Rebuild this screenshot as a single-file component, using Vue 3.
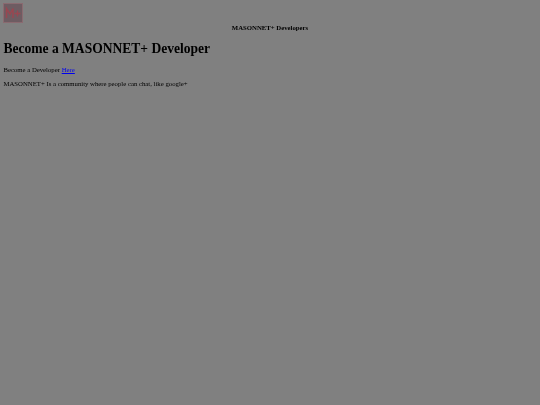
<script setup>
</script>

<template>
  <div class="page">
    <div class="content">
      <svg class="logo" width="20" height="20" viewBox="0 0 20 20" aria-label="MASONNET+ logo">
        <rect width="20" height="20" fill="#6e5c62" />
        <rect x="0.5" y="0.5" width="19" height="19" fill="none" stroke="#8a6a70" />
        <path d="M3.5 15V5.5L7 11l3-5.5V15" fill="none" stroke="#9a4650" stroke-width="1.5" />
        <path d="M11.5 10.5h6M14.5 7.5v6" fill="none" stroke="#9a4650" stroke-width="1.3" />
      </svg>
      <p class="title">MASONNET+ Developers</p>
      <h1>Become a MASONNET+ Developer</h1>
      <p class="line first">Become a Developer <a href="#">Here</a></p>
      <p class="line">MASONNET+ Is a community where people can chat, like google+</p>
    </div>
  </div>
</template>

<style scoped>
.page {
  min-height: 405px;
  box-sizing: border-box;
  padding: 3px 3px 3px 3px;
  background: #808080;
  color: #000;
  font-family: "Liberation Serif", serif;
  font-size: 6.75px;
}
.content {
  filter: blur(0.2px);
}
.logo {
  display: block;
}
.title {
  margin: 0;
  text-align: center;
  font-weight: bold;
  line-height: 9px;
}
h1 {
  margin: 8px 0 0 0.4px;
  font-size: 13.55px;
  line-height: 17px;
  font-weight: bold;
}
.line {
  margin: 5px 0 0 0.4px;
  line-height: 9px;
}
.line.first {
  margin-top: 8px;
}
a {
  color: #0000ee;
  text-decoration: underline;
}
</style>

<style>
body {
  margin: 0;
  background: #808080;
}
</style>
